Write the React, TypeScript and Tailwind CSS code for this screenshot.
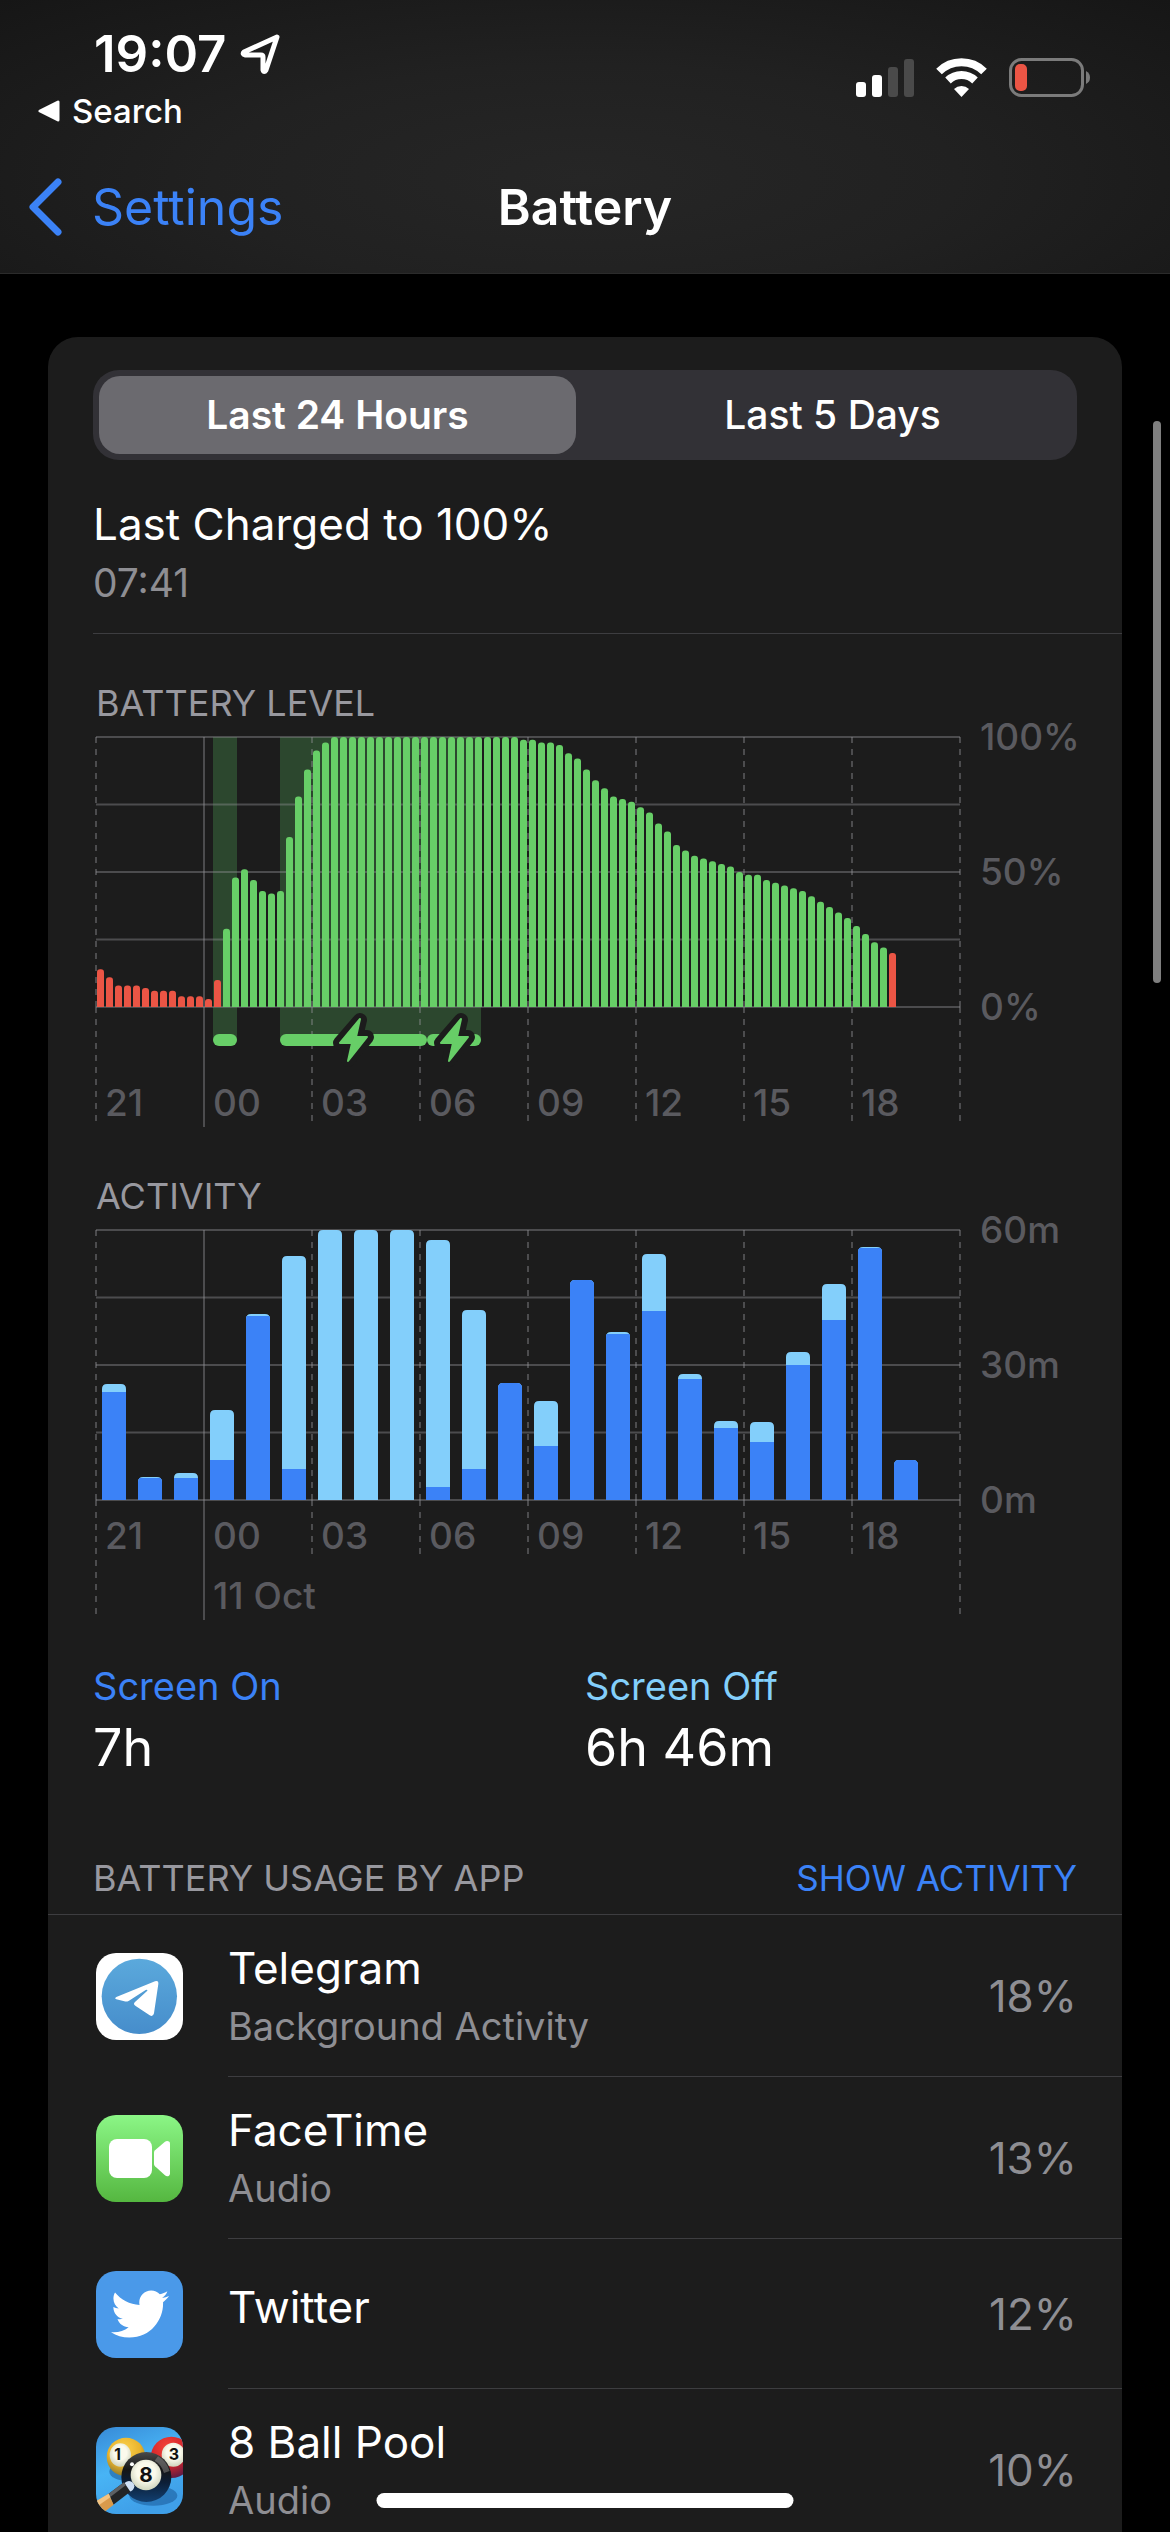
import React, { useState } from 'react';
import { FaTwitter } from 'react-icons/fa';

const HOURS = ['21', '00', '03', '06', '09', '12', '15', '18'];

// one sample every 15 minutes, in percent
const LEVELS = [
  14, 11, 8, 8, 8, 7, 6, 6, 6, 4, 4, 4, 3, 10, 29, 48, 51, 47, 43, 42, 43, 63, 78, 88, 95, 98,
  100, 100, 100, 100, 100, 100, 100, 100, 100, 100, 100, 100, 100, 100, 100, 100, 100, 100, 100, 100, 100,
  99, 99, 98, 98, 97, 94, 92, 88, 84, 81, 78, 77, 76, 74, 72, 68, 65, 60, 58, 56, 55, 54, 53, 52, 50,
  49, 49, 47, 46, 45, 44, 43, 41, 39, 37, 35, 33, 30, 27, 24, 22, 20,
];

const CHARGING = [
  { from: 117, to: 141, bolt: 0 },
  { from: 184, to: 331, bolt: 257 },
  { from: 331, to: 385, bolt: 358 },
];

// [screen on, total] bar heights per hour
const ACTIVITY = [
  [108, 116], [22, 23], [22, 27], [40, 90], [184, 186], [31, 244], [0, 270], [0, 270],
  [0, 270], [13, 260], [31, 190], [117, 117], [54, 99], [220, 220], [166, 168], [189, 246],
  [121, 126], [72, 79], [58, 78], [135, 148], [180, 216], [252, 253], [40, 40],
];

// bar with only its top corners rounded
const barPath = (x: number, w: number, h: number, r: number) => {
  const c = Math.min(r, h);
  return `M${x} 270V${270 - h + c}q0 ${-c} ${c} ${-c}h${w - 2 * c}q${c} 0 ${c} ${c}V270Z`;
};

interface GridProps {
  inner: number;
  outer: number;
}

const GridLines: React.FC<GridProps> = ({ inner, outer }) => (
  <g stroke="#8e8e93" strokeOpacity="0.42" strokeWidth="2">
    {[0, 67.5, 135, 202.5, 270].map(y => (
      <path key={y} d={`M0 ${y}H864`} />
    ))}
    {Array.from({ length: 9 }).map((_, i) => {
      const x = i * 108;
      if (i === 1) return <path key={i} d={`M${x} 0V390`} />;
      const tail = i === 0 || i === 8 ? outer : inner;
      return (
        <g key={i} strokeDasharray="6 6">
          <path d={`M${x} 0V270`} />
          <path d={`M${x} 270V${270 + tail}`} />
        </g>
      );
    })}
  </g>
);

const LevelPlot: React.FC = () => (
  <svg viewBox="0 0 864 390" className="block w-full overflow-visible [grid-area:1/1]" role="img" aria-label="Battery level">
    {CHARGING.map(c => (
      <rect key={c.from} x={c.from} y="0" width={c.to - c.from} height="303" fill="#2c472e" />
    ))}
    <GridLines inner={114} outer={114} />
    {LEVELS.map((level, i) => (
      <path
        key={i}
        d={barPath(i * 9 + 1, 7, level * 2.7, 3)}
        fill={level <= 20 ? '#eb5545' : '#67ce67'}
      />
    ))}
    {CHARGING.map(c => (
      <rect key={c.from} x={c.from} y="297" width={c.to - c.from} height="12" rx="6" fill="#67ce67" />
    ))}
    {CHARGING.filter(c => c.bolt > 0).map(c => (
      <g key={c.from} transform={`translate(${c.bolt} 303)`} strokeLinejoin="round">
        <path d="M7 -20L3 -3H14L-5 20L-1 3H-13Z" stroke="#1c1c1c" strokeWidth="14" />
        <path d="M7 -21L3 -3H14L-5 21L-1 3H-13Z" fill="#67ce67" stroke="#67ce67" strokeWidth="2" />
      </g>
    ))}
  </svg>
);

const ActivityPlot: React.FC = () => (
  <svg viewBox="0 0 864 390" className="block w-full overflow-visible [grid-area:1/1]" role="img" aria-label="Activity">
    <GridLines inner={54} outer={114} />
    {ACTIVITY.map(([on, total], i) => (
      <g key={i}>
        <clipPath id={`bar-${i}`}>
          <path d={barPath(i * 36 + 6, 24, total, 5)} />
        </clipPath>
        <g clipPath={`url(#bar-${i})`}>
          <rect x={i * 36 + 6} y={270 - total} width="24" height={total} fill="#83cffb" />
          <rect x={i * 36 + 6} y={270 - on} width="24" height={on} fill="#3b82f7" />
        </g>
      </g>
    ))}
  </svg>
);

interface ChartProps {
  title: string;
  scale: string[];
  date?: string;
  children: React.ReactNode;
}

const Chart: React.FC<ChartProps> = ({ title, scale, date, children }) => (
  <section className="mt-[45px] pl-12">
    <h2 className="text-[36px] leading-[48px] text-[#98989f]">{title}</h2>
    <div className="mt-[10px] flex font-medium text-[37px] leading-[48px] text-[#5a5a5f]">
      <div className="grid flex-1">
        {children}
        <div className="flex flex-col gap-3 self-end [grid-area:1/1]">
          <div className="grid grid-cols-8">
            {HOURS.map(hour => (
              <span key={hour} className="pl-[9px]">{hour}</span>
            ))}
          </div>
          {date && (
            <div className="grid grid-cols-8">
              <span className="col-start-2 pl-[9px] whitespace-nowrap">{date}</span>
            </div>
          )}
        </div>
      </div>
      <div className="-mt-6 flex h-[318px] w-[162px] flex-col justify-between pl-5">
        {scale.map(label => (
          <span key={label}>{label}</span>
        ))}
      </div>
    </div>
  </section>
);

const TelegramIcon: React.FC = () => (
  <svg viewBox="0 0 261 261" className="size-[87px] rounded-[20px] bg-white">
    <defs>
      <linearGradient id="tg" x1="0" y1="0" x2="0" y2="1">
        <stop offset="0" stopColor="#5ba9dc" />
        <stop offset="1" stopColor="#468dcb" />
      </linearGradient>
    </defs>
    <circle cx="130" cy="130" r="113" fill="url(#tg)" />
    <path
      d="M61 132L177 85Q188 81 187 93L174 181Q171 193 161 187L119 159Q110 153 117 147L154 113Q155 108 149 111L99 143Q92 147 85 145L61 139Q54 136 61 132Z"
      fill="#fff"
    />
  </svg>
);

const FaceTimeIcon: React.FC = () => (
  <svg viewBox="0 0 261 261" className="size-[87px] rounded-[20px]">
    <defs>
      <linearGradient id="ft" x1="0" y1="0" x2="0" y2="1">
        <stop offset="0" stopColor="#8bf686" />
        <stop offset="1" stopColor="#55b740" />
      </linearGradient>
    </defs>
    <rect width="261" height="261" fill="url(#ft)" />
    <rect x="39" y="72" width="129" height="117" rx="24" fill="#fff" />
    <path d="M174 113Q174 109 177 106L206 81Q213 75 220 80Q222 82 222 86V175Q222 180 219 182Q213 186 206 180L177 154Q174 151 174 147Z" fill="#fff" />
  </svg>
);

const TwitterIcon: React.FC = () => (
  <div className="flex size-[87px] items-center justify-center rounded-[20px] bg-[#4a99e9]">
    <FaTwitter className="size-[58px] text-white" />
  </div>
);

const PoolIcon: React.FC = () => (
  <svg viewBox="0 0 261 261" className="size-[87px] rounded-[20px] font-bold">
    <defs>
      <linearGradient id="table" x1="0" y1="0" x2="0.4" y2="1">
        <stop offset="0" stopColor="#3789d6" />
        <stop offset="0.5" stopColor="#48b4f5" />
        <stop offset="1" stopColor="#3f9fe8" />
      </linearGradient>
      <radialGradient id="yellow" cx="0.45" cy="0.3" r="0.7">
        <stop offset="0" stopColor="#fbd24e" />
        <stop offset="0.6" stopColor="#e9b32c" />
        <stop offset="1" stopColor="#8d7a2c" />
      </radialGradient>
      <radialGradient id="red" cx="0.4" cy="0.25" r="0.75">
        <stop offset="0" stopColor="#f4453a" />
        <stop offset="0.6" stopColor="#d2242a" />
        <stop offset="1" stopColor="#641c44" />
      </radialGradient>
      <linearGradient id="black" x1="0" y1="0" x2="0" y2="1">
        <stop offset="0" stopColor="#4a4a4a" />
        <stop offset="0.35" stopColor="#161616" />
        <stop offset="0.6" stopColor="#0c1e36" />
        <stop offset="1" stopColor="#123f70" />
      </linearGradient>
      <radialGradient id="spot" cx="0.5" cy="0.4" r="0.6">
        <stop offset="0.5" stopColor="#fbfaec" />
        <stop offset="1" stopColor="#cfd4bd" />
      </radialGradient>
    </defs>
    <rect width="261" height="261" fill="url(#table)" />
    <ellipse cx="96" cy="134" rx="56" ry="28" fill="#1d5f9f" opacity="0.6" />
    <ellipse cx="172" cy="206" rx="72" ry="30" fill="#1d5f9f" opacity="0.6" />
    <circle cx="90" cy="90" r="58" fill="url(#yellow)" />
    <ellipse cx="73" cy="84" rx="32" ry="35" fill="url(#spot)" />
    <text x="65" y="100" textAnchor="middle" fontSize="46" fill="#111">1</text>
    <circle cx="226" cy="91" r="62" fill="url(#red)" />
    <ellipse cx="232" cy="83" rx="35" ry="36" fill="url(#spot)" />
    <text x="234" y="100" textAnchor="middle" fontSize="48" fill="#111">3</text>
    <circle cx="151" cy="150" r="75" fill="url(#black)" />
    <path d="M186 88Q212 102 221 132L204 138Q196 112 176 101Z" fill="#8a8a8a" opacity="0.5" />
    <circle cx="150" cy="144" r="46" fill="url(#spot)" />
    <text x="150" y="166" textAnchor="middle" fontSize="62" fill="#111">8</text>
    <circle cx="108" cy="112" r="6" fill="#fff" />
    <circle cx="99" cy="178" r="16" fill="#cfe0f5" />
    <path d="M84 166L103 194L52 233L38 200Z" fill="#222426" />
    <path d="M84 166L90 174L43 210L38 200Z" fill="#5d6063" />
    <path d="M38 200L53 233L26 254L-2 224Z" fill="#d99a4b" />
    <path d="M38 200L43 211L6 236L-2 224Z" fill="#f3c382" />
  </svg>
);

const APPS = [
  { name: 'Telegram', detail: 'Background Activity', usage: '18%', icon: <TelegramIcon /> },
  { name: 'FaceTime', detail: 'Audio', usage: '13%', icon: <FaceTimeIcon /> },
  { name: 'Twitter', detail: '', usage: '12%', icon: <TwitterIcon /> },
  { name: '8 Ball Pool', detail: 'Audio', usage: '10%', icon: <PoolIcon /> },
];

const StatusIcons: React.FC = () => (
  <svg viewBox="0 0 236 40" className="mt-[34px] mr-[78px] h-10 w-[236px]">
    <g fill="#fff">
      <rect x="0" y="24" width="10" height="15" rx="3" />
      <rect x="16" y="17" width="10" height="22" rx="3" />
      <rect x="32" y="9" width="10" height="30" rx="3" fill="#4a4a4a" />
      <rect x="48" y="1" width="10" height="38" rx="3" fill="#4a4a4a" />
    </g>
    <g fill="none" stroke="#fff" strokeWidth="8">
      <path d="M83 13.500A32 32 0 0 1 128 13.500" />
      <path d="M92 22.500A19.500 19.500 0 0 1 119 22.500" />
    </g>
    <path d="M98 31A11 11 0 0 1 113 31L105.500 39Z" fill="#fff" />
    <rect x="154.500" y="1.500" width="72" height="36" rx="11" fill="none" stroke="#7b7b7b" strokeWidth="3" />
    <rect x="159" y="6" width="12" height="27" rx="5" fill="#eb5545" />
    <path d="M230 13Q234 15 234 19.500T230 26Z" fill="#7b7b7b" />
  </svg>
);

const App: React.FC = () => {
  const [tab, setTab] = useState('Last 24 Hours');

  return (
    <div className="relative flex h-screen flex-col overflow-hidden bg-black font-['Inter',sans-serif] text-white">
      {/* Status bar and navigation */}
      <header className="shrink-0 border-b border-[#2b2b2b] bg-[radial-gradient(ellipse_at_50%_65%,#262626_0%,#212121_45%,#161616_100%)] pt-6 pb-9">
        <div className="flex items-start justify-between">
          <div className="flex flex-col gap-[6px]">
            <div className="flex items-center gap-[14px] pl-[94px] text-[51px] leading-[60px] font-semibold">
              19:07
              <svg viewBox="0 0 42 42" className="size-[42px]" fill="none" stroke="#fff" strokeWidth="5" strokeLinejoin="round">
                <path d="M37 4L4 19Q2 21 5 22H21Q23 22 23 24V37Q24 40 26 37Z" />
              </svg>
            </div>
            <button type="button" className="flex items-center gap-3 pl-[38px] text-[33px] leading-[42px] font-medium">
              <svg viewBox="0 0 22 22" className="size-[22px]">
                <path d="M2 11L20 2V20Z" fill="#fff" stroke="#fff" strokeWidth="3" strokeLinejoin="round" />
              </svg>
              Search
            </button>
          </div>
          <StatusIcons />
        </div>
        <nav className="mt-[45px] grid grid-cols-[1fr_auto_1fr] items-center text-[50px] leading-[60px]">
          <a href="#settings" className="flex items-center gap-[30px] pl-7 text-[#3b82f7]">
            <svg viewBox="0 0 34 58" className="h-[58px] w-[34px]" fill="none" stroke="currentColor" strokeWidth="7" strokeLinecap="round" strokeLinejoin="round">
              <path d="M30 4L5 29L30 54" />
            </svg>
            Settings
          </a>
          <h1 className="font-semibold">Battery</h1>
        </nav>
      </header>

      <main className="mx-12 mt-[63px] rounded-t-[30px] bg-[#1c1c1c] pt-[33px]">
        {/* Period switch */}
        <div className="mx-[45px] grid h-[90px] grid-cols-2 gap-[18px] rounded-[26px] bg-[#323136] p-[6px]">
          {['Last 24 Hours', 'Last 5 Days'].map(label => (
            <button
              key={label}
              type="button"
              aria-pressed={tab === label}
              onClick={() => setTab(label)}
              className={`rounded-[21px] text-[39px] leading-[48px] ${tab === label ? 'bg-[#6b6a6f] font-semibold' : 'font-medium'}`}
            >
              {label}
            </button>
          ))}
        </div>

        <div className="ml-[45px] border-b border-[#3d3d40] pt-[34px] pb-[26px]">
          <p className="text-[44px] leading-[60px]">Last Charged to 100%</p>
          <p className="mt-[5px] text-[39px] leading-[48px] text-[#8e8e93]">07:41</p>
        </div>

        <Chart title="BATTERY LEVEL" scale={['100%', '50%', '0%']}>
          <LevelPlot />
        </Chart>
        <Chart title="ACTIVITY" scale={['60m', '30m', '0m']} date="11 Oct">
          <ActivityPlot />
        </Chart>

        {/* Totals */}
        <dl className="mx-[45px] mt-[42px] grid grid-cols-2">
          <div>
            <dt className="text-[38px] leading-[48px] text-[#3b82f7]">Screen On</dt>
            <dd className="mt-2 text-[52px] leading-[60px]">7h</dd>
          </div>
          <div>
            <dt className="text-[38px] leading-[48px] text-[#83cffb]">Screen Off</dt>
            <dd className="mt-2 text-[52px] leading-[60px]">6h 46m</dd>
          </div>
        </dl>

        {/* Usage list */}
        <div className="mt-[76px] flex justify-between border-b border-[#3d3d40] px-[45px] pb-3 leading-[48px]">
          <h2 className="text-[36px] text-[#98989f]">BATTERY USAGE BY APP</h2>
          <button type="button" className="text-[35px] text-[#3b82f7]">SHOW ACTIVITY</button>
        </div>
        <ul>
          {APPS.map(app => (
            <li key={app.name} className="flex items-center gap-[45px] pl-12">
              {app.icon}
              <div className={`flex flex-1 items-center justify-between border-b border-[#3d3d40] pr-[45px] ${app.detail ? 'h-[162px]' : 'h-[150px]'}`}>
                <div className={app.detail ? 'pb-1' : 'pb-[14px]'}>
                  <p className="text-[44px] leading-[60px]">{app.name}</p>
                  {app.detail && <p className="mt-1 text-[38px] leading-[48px] text-[#8e8e93]">{app.detail}</p>}
                </div>
                <span className="text-[44px] leading-[60px] text-[#8e8e93]">{app.usage}</span>
              </div>
            </li>
          ))}
        </ul>
      </main>

      {/* Scroll indicator and home bar */}
      <div className="absolute top-[421px] right-[9px] h-[562px] w-2 rounded-full bg-[#7f7f7f]" />
      <div className="absolute bottom-6 left-1/2 h-[15px] w-[417px] -translate-x-1/2 rounded-full bg-white" />
    </div>
  );
};

export default App;
